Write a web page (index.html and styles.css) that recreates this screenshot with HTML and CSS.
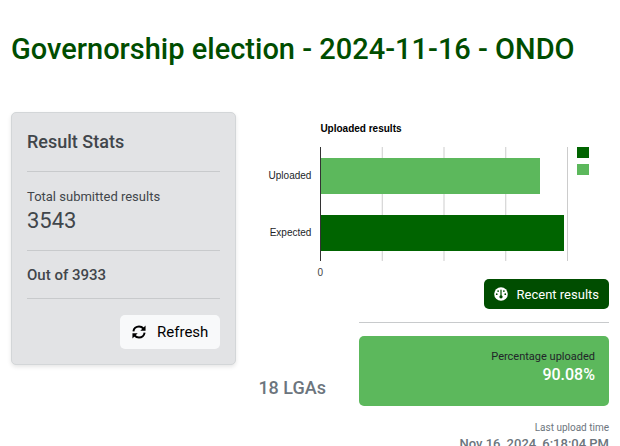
FILE: index.html
```html
<!DOCTYPE html>
<html lang="en">

<head>
    <meta charset="UTF-8">
    <meta name="viewport" content="width=device-width, initial-scale=1.0">
    <title>Governorship election - 2024-11-16 - ONDO</title>
    <link rel="stylesheet" href="styles.css">
</head>

<body>
    <h1 class="page-title">Governorship election - 2024-11-16 - ONDO</h1>
    <main class="results">
        <section class="stats-card">
            <h2 class="stats-title">Result Stats</h2>
            <hr>
            <p class="stats-label">Total submitted results</p>
            <p class="stats-total">3543</p>
            <hr>
            <p class="stats-expected">Out of 3933</p>
            <hr>
            <button class="btn btn-light" type="button">
                <svg class="icon" viewBox="0 0 512 512" fill="none" stroke="currentColor" stroke-width="72" aria-hidden="true">
                    <path d="M52 232C64 128 150 52 256 52c66 0 122 28 162 76" />
                    <path d="M460 280c-12 104-98 180-204 180-66 0-122-28-162-76" />
                    <path d="M496 16v192H304zM16 496V304h192z" fill="currentColor" stroke="none" />
                </svg>
                Refresh
            </button>
        </section>
        <section class="summary">
            <div class="chart">
                <h3 class="chart-title">Uploaded results</h3>
                <div class="chart-labels">
                    <span>Uploaded</span>
                    <span>Expected</span>
                </div>
                <div class="chart-plot">
                    <div class="bar bar-uploaded" style="width: 88.6%"></div>
                    <div class="bar bar-expected" style="width: 98.3%"></div>
                </div>
                <div class="chart-legend">
                    <span class="swatch bar-expected"></span>
                    <span class="swatch bar-uploaded"></span>
                </div>
                <span class="chart-zero">0</span>
            </div>
            <button class="btn btn-recent" type="button">
                <svg class="icon" viewBox="0 0 512 512" aria-hidden="true">
                    <circle cx="256" cy="256" r="250" fill="#fff" />
                    <path d="M256 110v230" stroke="#004d00" stroke-width="44" stroke-linecap="round" />
                    <g fill="#004d00">
                        <circle cx="256" cy="358" r="60" />
                        <circle cx="150" cy="150" r="32" />
                        <circle cx="362" cy="150" r="32" />
                        <circle cx="100" cy="262" r="32" />
                        <circle cx="412" cy="262" r="32" />
                    </g>
                </svg>
                Recent results
            </button>
            <div class="upload">
                <h2 class="lga-count">18 LGAs</h2>
                <div class="upload-info">
                    <hr>
                    <div class="percent-card">
                        <p class="percent-label">Percentage uploaded</p>
                        <p class="percent-value">90.08%</p>
                    </div>
                    <p class="time-label">Last upload time</p>
                    <p class="time-value">Nov 16, 2024, 6:18:04 PM</p>
                </div>
            </div>
        </section>
    </main>
</body>

</html>
```

FILE: styles.css
```css
* {
    box-sizing: border-box;
}

body {
    margin: 0;
    padding: 31px 11px 0;
    font-family: Roboto, sans-serif;
    font-size: 14px;
    color: #212529;
    background-color: #fff;
}

h1,
h2,
h3,
p {
    margin: 0;
    font-weight: 500;
}

hr {
    width: 100%;
    margin: 0;
    border: none;
    border-top: 1px solid #c8cacc;
}

.page-title {
    font-size: 29px;
    line-height: 36px;
    color: #004d00;
}

.results {
    display: grid;
    grid-template-columns: 9fr 14fr;
    gap: 22px;
    align-items: start;
    margin-top: 45px;
}

/* left card */
.stats-card {
    display: flex;
    flex-direction: column;
    padding: 16px 15px 15px;
    color: #41464b;
    background-color: #e2e3e5;
    border: 1px solid #d3d6d8;
    border-radius: 5px;
    box-shadow: 0 2px 4px rgba(0, 0, 0, 0.1);
}

.stats-title {
    padding: 2px 0 18px;
    font-size: 18px;
    line-height: 22px;
}

.stats-label {
    padding-top: 16px;
    font-weight: 400;
    font-size: 13px;
    line-height: 18px;
}

.stats-total {
    padding: 1px 0 15px;
    font-weight: 400;
    font-size: 22px;
    line-height: 28px;
}

.stats-expected {
    padding: 14px 0 13px;
    font-size: 15px;
    line-height: 20px;
}

.btn {
    display: flex;
    align-items: center;
    align-self: flex-end;
    border: none;
    border-radius: 5px;
    font-family: inherit;
    cursor: pointer;
}

.btn-light {
    gap: 11px;
    height: 34px;
    margin-top: 16px;
    padding: 0 12px;
    font-size: 15px;
    color: #000;
    background-color: #f8f9fa;
}

.btn-recent {
    gap: 9px;
    height: 30px;
    padding: 0 10px;
    font-size: 13px;
    color: #fff;
    background-color: #004d00;
}

.btn:hover {
    opacity: 0.9;
}

.icon {
    width: 14px;
    height: 14px;
}

.summary {
    display: flex;
    flex-direction: column;
}

/* bar chart, axis runs from 0 to 4000 */
.chart {
    display: grid;
    grid-template-columns: 53px 1fr 12px;
    column-gap: 9px;
    padding: 11px 20px 0 0;
    font-family: "Liberation Sans", Arial, sans-serif;
    font-size: 10px;
    line-height: 12px;
}

.chart-title {
    grid-column: 2 / 4;
    padding-bottom: 12px;
    font-size: 10px;
    font-weight: 700;
    color: #000;
}

.chart-labels,
.chart-plot {
    display: grid;
    grid-template-rows: 36px 36px;
    row-gap: 21px;
    padding: 11px 0 10px;
}

.chart-labels {
    grid-column: 1;
    align-items: center;
    text-align: right;
}

.chart-plot {
    border-left: 1px solid #333;
    background-image: linear-gradient(to left, #ccc 1px, transparent 1px);
    background-size: 25% 100%;
}

.bar-uploaded {
    background-color: #5cb85c;
}

.bar-expected {
    background-color: #006400;
}

.chart-legend {
    display: grid;
    gap: 6px;
    align-content: start;
}

.swatch {
    height: 11px;
}

.chart-zero {
    grid-column: 2;
    justify-self: start;
    padding-top: 6px;
    color: #444;
    transform: translateX(-50%);
}

.upload {
    display: grid;
    grid-template-columns: 2fr 5fr;
    margin-top: 13px;
}

.lga-count {
    padding-top: 54px;
    font-size: 18px;
    line-height: 24px;
    color: #6c757d;
}

.upload-info {
    text-align: right;
    color: #6c757d;
}

.percent-card {
    margin: 13px 0 16px;
    padding: 14px;
    background-color: #5cb85c;
    border-radius: 5px;
}

.percent-label {
    font-weight: 400;
    font-size: 11px;
    line-height: 14px;
    color: #212529;
}

.percent-value {
    padding-bottom: 6px;
    font-size: 16px;
    line-height: 22px;
    color: #fff;
}

.time-label {
    font-weight: 400;
    font-size: 10px;
    line-height: 12px;
}

.time-value {
    font-size: 13px;
    line-height: 20px;
}
```
